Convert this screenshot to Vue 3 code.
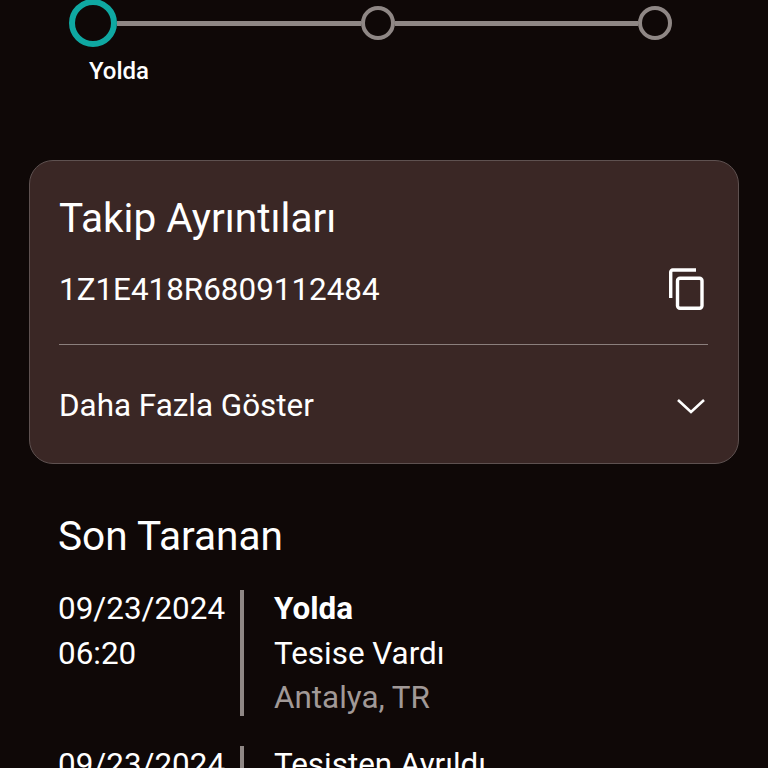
<script setup>
const scans = [
  { date: '09/23/2024', time: '06:20', status: 'Yolda', detail: 'Tesise Vardı', place: 'Antalya, TR' },
  { date: '09/23/2024', time: '02:10', detail: 'Tesisten Ayrıldı', place: 'Antalya, TR' }
]
</script>

<template>
  <div class="page">
    <div class="stepper">
      <div class="step-first">
        <span class="dot dot-active"></span>
        <span class="step-label">Yolda</span>
      </div>
      <span class="line line-one"></span>
      <span class="dot"></span>
      <span class="line line-two"></span>
      <span class="dot"></span>
    </div>

    <section class="card">
      <h2 class="card-title">Takip Ayrıntıları</h2>
      <div class="tracking-row">
        <span class="tracking">1Z1E418R6809112484</span>
        <svg class="copy-icon" width="36" height="42" viewBox="0 0 36 42" fill="none" stroke="#fff" stroke-width="3.4">
          <path d="M2.7 30V4a2 2 0 0 1 2-2h23.3" />
          <rect x="9.5" y="10.2" width="24.5" height="30" rx="2.5" />
        </svg>
      </div>
      <div class="divider"></div>
      <div class="more-row">
        <span>Daha Fazla Göster</span>
        <svg class="chevron" width="30" height="18" viewBox="0 0 30 18" fill="none" stroke="#fff" stroke-width="2.6">
          <path d="M2 3l13 12L28 3" />
        </svg>
      </div>
    </section>

    <h2 class="scan-title">Son Taranan</h2>
    <div class="scan-list">
      <div v-for="(scan, i) in scans" :key="i" class="scan">
        <div class="scan-when">
          <div>{{ scan.date }}</div>
          <div>{{ scan.time }}</div>
        </div>
        <div class="scan-bar"></div>
        <div class="scan-what">
          <div v-if="scan.status" class="scan-status">{{ scan.status }}</div>
          <div>{{ scan.detail }}</div>
          <div class="scan-place">{{ scan.place }}</div>
        </div>
      </div>
    </div>
  </div>
</template>

<style>
html, body {
  margin: 0;
  background: #0f0807;
  overflow: hidden;
}
</style>

<style scoped>
.page {
  height: 768px;
  overflow: hidden;
  background: #0f0807;
  color: #fff;
  font-family: Roboto, sans-serif;
  box-sizing: border-box;
}

.stepper {
  display: flex;
  align-items: flex-start;
  height: 161px;
  padding-left: 69px;
  margin-top: -1px;
}

.step-first {
  position: relative;
  width: 48px;
  flex: none;
}

.step-label {
  display: block;
  width: 100px;
  margin: 9px 0 0 0;
  text-align: center;
  font-size: 24px;
  line-height: 30px;
  font-weight: 500;
}

.dot {
  display: block;
  flex: none;
  width: 34px;
  height: 34px;
  margin-top: 7px;
  box-sizing: border-box;
  border: 4px solid #8f8785;
  border-radius: 50%;
}

.dot-active {
  width: 48px;
  height: 48px;
  margin-top: 0;
  border: 6px solid #0fa8a2;
}

.line {
  flex: none;
  height: 5px;
  margin-top: 22px;
  background: #8f8785;
}

.line-one {
  width: 244px;
}

.line-two {
  width: 243px;
}

.card {
  width: 710px;
  height: 304px;
  margin-left: 29px;
  padding: 0 30px 0 29px;
  box-sizing: border-box;
  background: #3a2725;
  border: 1.5px solid #5e5150;
  border-radius: 24px;
}

.card-title {
  margin: 30px 0 0;
  font-size: 40.6px;
  line-height: 54px;
  font-weight: 400;
}

.tracking-row {
  display: flex;
  justify-content: space-between;
  align-items: center;
  height: 60px;
  margin-top: 14px;
  font-size: 31.4px;
}

.copy-icon {
  margin-right: 4px;
}

.divider {
  height: 1px;
  margin-top: 25px;
  background: #8b7f7d;
}

.more-row {
  display: flex;
  justify-content: space-between;
  align-items: center;
  height: 120px;
  font-size: 31.4px;
}

.chevron {
  margin-right: 2px;
  margin-top: 2px;
}

.scan-title {
  margin: 45px 0 0 58px;
  font-size: 40.6px;
  line-height: 54px;
  font-weight: 400;
}

.scan-list {
  margin: 27px 0 0 58px;
}

.scan {
  display: flex;
  height: 126px;
  margin-bottom: 30px;
  font-size: 31.4px;
  line-height: 44.5px;
}

.scan-when {
  width: 182px;
  flex: none;
  margin-top: -3px;
}

.scan-bar {
  width: 4px;
  flex: none;
  background: #8f8785;
}

.scan-what {
  margin-left: 30px;
  margin-top: -3px;
}

.scan-status {
  font-weight: 700;
}

.scan-place {
  color: #a19997;
}
</style>
